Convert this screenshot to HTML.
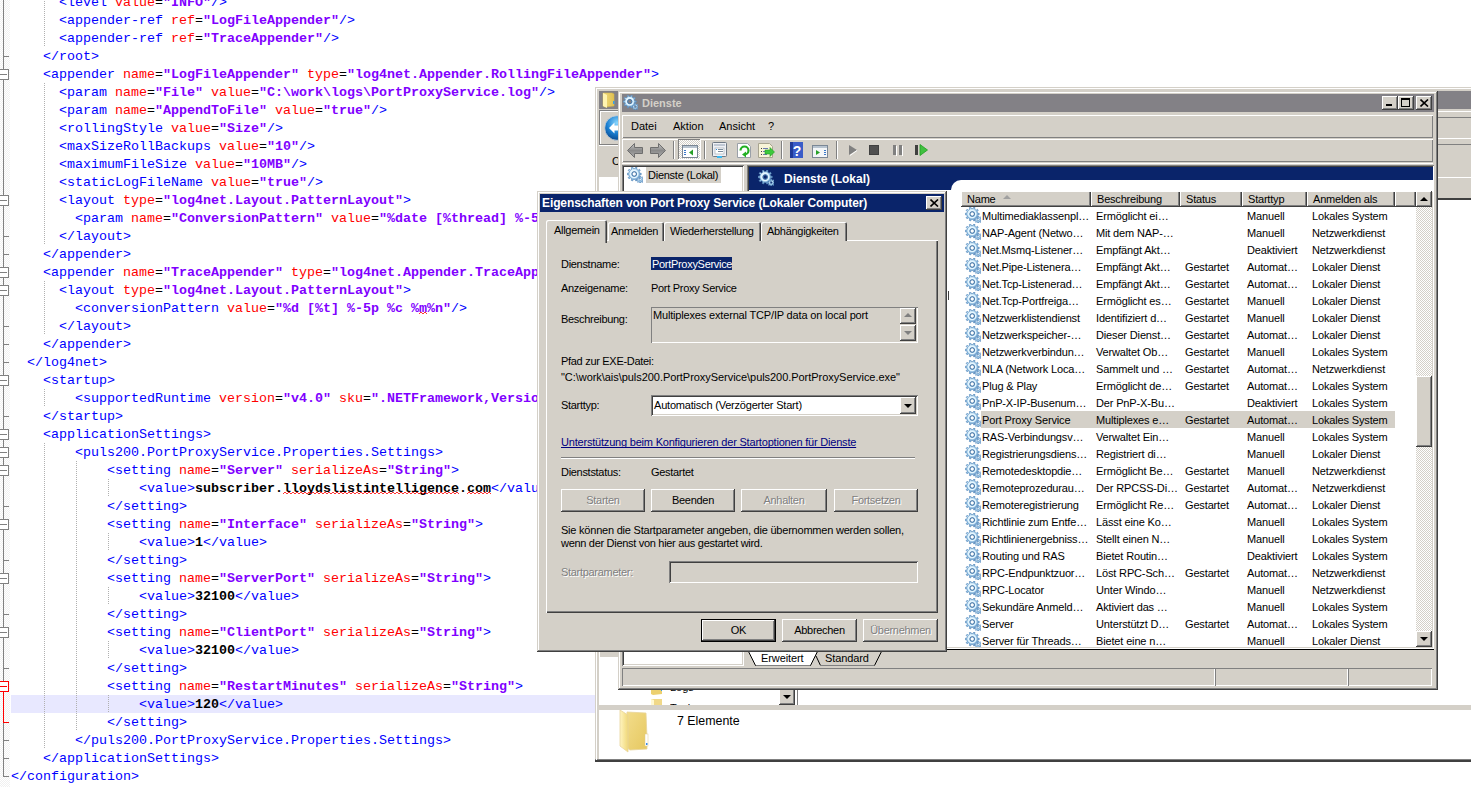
<!DOCTYPE html>
<html><head><meta charset="utf-8"><style>
*{margin:0;padding:0;box-sizing:border-box}
html,body{width:1471px;height:787px;overflow:hidden;background:#fff;position:relative}
div,span{position:absolute}
#ed .ln{white-space:pre;font-family:"Liberation Mono",monospace;font-size:13.333px;line-height:18px;height:18px}
#ed i{font-style:normal;position:static}
#ed .t{color:#0000ff}
#ed .a{color:#ff0000}
#ed .e{color:#000}
#ed .v{color:#8000ff;font-weight:bold}
#ed .x{color:#000;font-weight:bold}
.ui{font-family:"Liberation Sans",sans-serif;font-size:11px;color:#000;white-space:nowrap}
</style></head><body>
<div id="ed">
<div style="position:absolute;left:11px;top:695px;width:590px;height:18px;background:#e8e8ff"></div>
<div class="ln" style="left:59px;top:-6px"><i class="t">&lt;level </i><i class="a">value</i><i class="e">=</i><i class="v">&quot;INFO&quot;</i><i class="t">/&gt;</i></div>
<div class="ln" style="left:59px;top:12px"><i class="t">&lt;appender-ref </i><i class="a">ref</i><i class="e">=</i><i class="v">&quot;LogFileAppender&quot;</i><i class="t">/&gt;</i></div>
<div class="ln" style="left:59px;top:30px"><i class="t">&lt;appender-ref </i><i class="a">ref</i><i class="e">=</i><i class="v">&quot;TraceAppender&quot;</i><i class="t">/&gt;</i></div>
<div class="ln" style="left:43px;top:48px"><i class="t">&lt;/root&gt;</i></div>
<div class="ln" style="left:43px;top:66px"><i class="t">&lt;appender </i><i class="a">name</i><i class="e">=</i><i class="v">&quot;LogFileAppender&quot;</i><i class="t"> </i><i class="a">type</i><i class="e">=</i><i class="v">&quot;log4net.Appender.RollingFileAppender&quot;</i><i class="t">&gt;</i></div>
<div class="ln" style="left:59px;top:84px"><i class="t">&lt;param </i><i class="a">name</i><i class="e">=</i><i class="v">&quot;File&quot;</i><i class="t"> </i><i class="a">value</i><i class="e">=</i><i class="v">&quot;C:\work\logs\PortProxyService.log&quot;</i><i class="t">/&gt;</i></div>
<div class="ln" style="left:59px;top:102px"><i class="t">&lt;param </i><i class="a">name</i><i class="e">=</i><i class="v">&quot;AppendToFile&quot;</i><i class="t"> </i><i class="a">value</i><i class="e">=</i><i class="v">&quot;true&quot;</i><i class="t">/&gt;</i></div>
<div class="ln" style="left:59px;top:120px"><i class="t">&lt;rollingStyle </i><i class="a">value</i><i class="e">=</i><i class="v">&quot;Size&quot;</i><i class="t">/&gt;</i></div>
<div class="ln" style="left:59px;top:138px"><i class="t">&lt;maxSizeRollBackups </i><i class="a">value</i><i class="e">=</i><i class="v">&quot;10&quot;</i><i class="t">/&gt;</i></div>
<div class="ln" style="left:59px;top:156px"><i class="t">&lt;maximumFileSize </i><i class="a">value</i><i class="e">=</i><i class="v">&quot;10MB&quot;</i><i class="t">/&gt;</i></div>
<div class="ln" style="left:59px;top:174px"><i class="t">&lt;staticLogFileName </i><i class="a">value</i><i class="e">=</i><i class="v">&quot;true&quot;</i><i class="t">/&gt;</i></div>
<div class="ln" style="left:59px;top:192px"><i class="t">&lt;layout </i><i class="a">type</i><i class="e">=</i><i class="v">&quot;log4net.Layout.PatternLayout&quot;</i><i class="t">&gt;</i></div>
<div class="ln" style="left:75px;top:210px"><i class="t">&lt;param </i><i class="a">name</i><i class="e">=</i><i class="v">&quot;ConversionPattern&quot;</i><i class="t"> </i><i class="a">value</i><i class="e">=</i><i class="v">&quot;%date [%thread] %-5level %logger - %message%newline&quot;</i><i class="t">/&gt;</i></div>
<div class="ln" style="left:59px;top:228px"><i class="t">&lt;/layout&gt;</i></div>
<div class="ln" style="left:43px;top:246px"><i class="t">&lt;/appender&gt;</i></div>
<div class="ln" style="left:43px;top:264px"><i class="t">&lt;appender </i><i class="a">name</i><i class="e">=</i><i class="v">&quot;TraceAppender&quot;</i><i class="t"> </i><i class="a">type</i><i class="e">=</i><i class="v">&quot;log4net.Appender.TraceAppender&quot;</i><i class="t">&gt;</i></div>
<div class="ln" style="left:59px;top:282px"><i class="t">&lt;layout </i><i class="a">type</i><i class="e">=</i><i class="v">&quot;log4net.Layout.PatternLayout&quot;</i><i class="t">&gt;</i></div>
<div class="ln" style="left:75px;top:300px"><i class="t">&lt;conversionPattern </i><i class="a">value</i><i class="e">=</i><i class="v">&quot;%d [%t] %-5p %c %m%n&quot;</i><i class="t">/&gt;</i></div>
<div class="ln" style="left:59px;top:318px"><i class="t">&lt;/layout&gt;</i></div>
<div class="ln" style="left:43px;top:336px"><i class="t">&lt;/appender&gt;</i></div>
<div class="ln" style="left:27px;top:354px"><i class="t">&lt;/log4net&gt;</i></div>
<div class="ln" style="left:43px;top:372px"><i class="t">&lt;startup&gt;</i></div>
<div class="ln" style="left:75px;top:390px"><i class="t">&lt;supportedRuntime </i><i class="a">version</i><i class="e">=</i><i class="v">&quot;v4.0&quot;</i><i class="t"> </i><i class="a">sku</i><i class="e">=</i><i class="v">&quot;.NETFramework,Version=v4.5&quot;</i><i class="t">/&gt;</i></div>
<div class="ln" style="left:43px;top:408px"><i class="t">&lt;/startup&gt;</i></div>
<div class="ln" style="left:43px;top:426px"><i class="t">&lt;applicationSettings&gt;</i></div>
<div class="ln" style="left:75px;top:444px"><i class="t">&lt;puls200.PortProxyService.Properties.Settings&gt;</i></div>
<div class="ln" style="left:107px;top:462px"><i class="t">&lt;setting </i><i class="a">name</i><i class="e">=</i><i class="v">&quot;Server&quot;</i><i class="t"> </i><i class="a">serializeAs</i><i class="e">=</i><i class="v">&quot;String&quot;</i><i class="t">&gt;</i></div>
<div class="ln" style="left:139px;top:480px"><i class="t">&lt;value&gt;</i><i class="x">subscriber.lloydslistintelligence.com</i><i class="t">&lt;/value&gt;</i></div>
<div class="ln" style="left:107px;top:498px"><i class="t">&lt;/setting&gt;</i></div>
<div class="ln" style="left:107px;top:516px"><i class="t">&lt;setting </i><i class="a">name</i><i class="e">=</i><i class="v">&quot;Interface&quot;</i><i class="t"> </i><i class="a">serializeAs</i><i class="e">=</i><i class="v">&quot;String&quot;</i><i class="t">&gt;</i></div>
<div class="ln" style="left:139px;top:534px"><i class="t">&lt;value&gt;</i><i class="x">1</i><i class="t">&lt;/value&gt;</i></div>
<div class="ln" style="left:107px;top:552px"><i class="t">&lt;/setting&gt;</i></div>
<div class="ln" style="left:107px;top:570px"><i class="t">&lt;setting </i><i class="a">name</i><i class="e">=</i><i class="v">&quot;ServerPort&quot;</i><i class="t"> </i><i class="a">serializeAs</i><i class="e">=</i><i class="v">&quot;String&quot;</i><i class="t">&gt;</i></div>
<div class="ln" style="left:139px;top:588px"><i class="t">&lt;value&gt;</i><i class="x">32100</i><i class="t">&lt;/value&gt;</i></div>
<div class="ln" style="left:107px;top:606px"><i class="t">&lt;/setting&gt;</i></div>
<div class="ln" style="left:107px;top:624px"><i class="t">&lt;setting </i><i class="a">name</i><i class="e">=</i><i class="v">&quot;ClientPort&quot;</i><i class="t"> </i><i class="a">serializeAs</i><i class="e">=</i><i class="v">&quot;String&quot;</i><i class="t">&gt;</i></div>
<div class="ln" style="left:139px;top:642px"><i class="t">&lt;value&gt;</i><i class="x">32100</i><i class="t">&lt;/value&gt;</i></div>
<div class="ln" style="left:107px;top:660px"><i class="t">&lt;/setting&gt;</i></div>
<div class="ln" style="left:107px;top:678px"><i class="t">&lt;setting </i><i class="a">name</i><i class="e">=</i><i class="v">&quot;RestartMinutes&quot;</i><i class="t"> </i><i class="a">serializeAs</i><i class="e">=</i><i class="v">&quot;String&quot;</i><i class="t">&gt;</i></div>
<div class="ln" style="left:139px;top:696px"><i class="t">&lt;value&gt;</i><i class="x">120</i><i class="t">&lt;/value&gt;</i></div>
<div class="ln" style="left:107px;top:714px"><i class="t">&lt;/setting&gt;</i></div>
<div class="ln" style="left:75px;top:732px"><i class="t">&lt;/puls200.PortProxyService.Properties.Settings&gt;</i></div>
<div class="ln" style="left:43px;top:750px"><i class="t">&lt;/applicationSettings&gt;</i></div>
<div class="ln" style="left:11px;top:768px"><i class="t">&lt;/configuration&gt;</i></div>
<div style="left:0;top:0;width:10px;height:787px;background:repeating-conic-gradient(#f0f0f0 0 25%,#fff 0 50%) 0 0/2px 2px"></div>
<div style="left:3px;top:0;width:1px;height:776px;background:#808080"></div>
<div style="left:3px;top:686px;width:1px;height:36px;background:#ff0000"></div>
<div style="left:3px;top:56px;width:6px;height:1px;background:#808080"></div>
<div style="left:3px;top:236px;width:6px;height:1px;background:#808080"></div>
<div style="left:3px;top:254px;width:6px;height:1px;background:#808080"></div>
<div style="left:3px;top:326px;width:6px;height:1px;background:#808080"></div>
<div style="left:3px;top:344px;width:6px;height:1px;background:#808080"></div>
<div style="left:3px;top:362px;width:6px;height:1px;background:#808080"></div>
<div style="left:3px;top:416px;width:6px;height:1px;background:#808080"></div>
<div style="left:3px;top:506px;width:6px;height:1px;background:#808080"></div>
<div style="left:3px;top:560px;width:6px;height:1px;background:#808080"></div>
<div style="left:3px;top:614px;width:6px;height:1px;background:#808080"></div>
<div style="left:3px;top:668px;width:6px;height:1px;background:#808080"></div>
<div style="left:3px;top:722px;width:6px;height:1px;background:#ff0000"></div>
<div style="left:3px;top:740px;width:6px;height:1px;background:#808080"></div>
<div style="left:3px;top:758px;width:6px;height:1px;background:#808080"></div>
<div style="left:3px;top:776px;width:6px;height:1px;background:#808080"></div>
<div style="left:-2px;top:69px;width:11px;height:11px;border:1px solid #808080;background:#fff"></div>
<div style="left:0;top:74px;width:7px;height:1px;background:#808080"></div>
<div style="left:-2px;top:195px;width:11px;height:11px;border:1px solid #808080;background:#fff"></div>
<div style="left:0;top:200px;width:7px;height:1px;background:#808080"></div>
<div style="left:-2px;top:267px;width:11px;height:11px;border:1px solid #808080;background:#fff"></div>
<div style="left:0;top:272px;width:7px;height:1px;background:#808080"></div>
<div style="left:-2px;top:285px;width:11px;height:11px;border:1px solid #808080;background:#fff"></div>
<div style="left:0;top:290px;width:7px;height:1px;background:#808080"></div>
<div style="left:-2px;top:375px;width:11px;height:11px;border:1px solid #808080;background:#fff"></div>
<div style="left:0;top:380px;width:7px;height:1px;background:#808080"></div>
<div style="left:-2px;top:429px;width:11px;height:11px;border:1px solid #808080;background:#fff"></div>
<div style="left:0;top:434px;width:7px;height:1px;background:#808080"></div>
<div style="left:-2px;top:447px;width:11px;height:11px;border:1px solid #808080;background:#fff"></div>
<div style="left:0;top:452px;width:7px;height:1px;background:#808080"></div>
<div style="left:-2px;top:465px;width:11px;height:11px;border:1px solid #808080;background:#fff"></div>
<div style="left:0;top:470px;width:7px;height:1px;background:#808080"></div>
<div style="left:-2px;top:519px;width:11px;height:11px;border:1px solid #808080;background:#fff"></div>
<div style="left:0;top:524px;width:7px;height:1px;background:#808080"></div>
<div style="left:-2px;top:573px;width:11px;height:11px;border:1px solid #808080;background:#fff"></div>
<div style="left:0;top:578px;width:7px;height:1px;background:#808080"></div>
<div style="left:-2px;top:627px;width:11px;height:11px;border:1px solid #808080;background:#fff"></div>
<div style="left:0;top:632px;width:7px;height:1px;background:#808080"></div>
<div style="left:-2px;top:681px;width:11px;height:11px;border:1px solid #ff0000;background:#fff"></div>
<div style="left:0;top:686px;width:7px;height:1px;background:#ff0000"></div>
<div style="left:44px;top:-7px;width:1px;height:54px;background:repeating-linear-gradient(#b0b0b0 0 1px,transparent 1px 2px)"></div>
<div style="left:44px;top:83px;width:1px;height:162px;background:repeating-linear-gradient(#b0b0b0 0 1px,transparent 1px 2px)"></div>
<div style="left:44px;top:281px;width:1px;height:54px;background:repeating-linear-gradient(#b0b0b0 0 1px,transparent 1px 2px)"></div>
<div style="left:44px;top:389px;width:1px;height:18px;background:repeating-linear-gradient(#b0b0b0 0 1px,transparent 1px 2px)"></div>
<div style="left:44px;top:443px;width:1px;height:306px;background:repeating-linear-gradient(#b0b0b0 0 1px,transparent 1px 2px)"></div>
<div style="left:76px;top:461px;width:1px;height:270px;background:repeating-linear-gradient(#b0b0b0 0 1px,transparent 1px 2px)"></div>
<div style="left:108px;top:479px;width:1px;height:18px;background:repeating-linear-gradient(#b0b0b0 0 1px,transparent 1px 2px)"></div>
<div style="left:108px;top:533px;width:1px;height:18px;background:repeating-linear-gradient(#b0b0b0 0 1px,transparent 1px 2px)"></div>
<div style="left:108px;top:587px;width:1px;height:18px;background:repeating-linear-gradient(#b0b0b0 0 1px,transparent 1px 2px)"></div>
<div style="left:108px;top:641px;width:1px;height:18px;background:repeating-linear-gradient(#b0b0b0 0 1px,transparent 1px 2px)"></div>
<div style="left:108px;top:695px;width:1px;height:18px;background:repeating-linear-gradient(#b0b0b0 0 1px,transparent 1px 2px)"></div>
<svg style="position:absolute;left:283px;top:492px" width="177" height="3"><polyline points="0,2 2,0 4,2 6,0 8,2 10,0 12,2 14,0 16,2 18,0 20,2 22,0 24,2 26,0 28,2 30,0 32,2 34,0 36,2 38,0 40,2 42,0 44,2 46,0 48,2 50,0 52,2 54,0 56,2 58,0 60,2 62,0 64,2 66,0 68,2 70,0 72,2 74,0 76,2 78,0 80,2 82,0 84,2 86,0 88,2 90,0 92,2 94,0 96,2 98,0 100,2 102,0 104,2 106,0 108,2 110,0 112,2 114,0 116,2 118,0 120,2 122,0 124,2 126,0 128,2 130,0 132,2 134,0 136,2 138,0 140,2 142,0 144,2 146,0 148,2 150,0 152,2 154,0 156,2 158,0 160,2 162,0 164,2 166,0 168,2 170,0 172,2 174,0 176,2" fill="none" stroke="#ff0000" stroke-width="0.8"/></svg>
<svg style="position:absolute;left:467px;top:492px" width="25" height="3"><polyline points="0,2 2,0 4,2 6,0 8,2 10,0 12,2 14,0 16,2 18,0 20,2 22,0 24,2" fill="none" stroke="#ff0000" stroke-width="0.8"/></svg>
<svg style="position:absolute;left:419px;top:312px" width="9" height="3"><polyline points="0,2 2,0 4,2 6,0 8,2" fill="none" stroke="#ff0000" stroke-width="0.8"/></svg>
</div>
<svg width="0" height="0" style="position:absolute"><defs><radialGradient id="gg" cx="40%" cy="35%" r="70%"><stop offset="0" stop-color="#f0faff"/><stop offset="0.5" stop-color="#b4dcf4"/><stop offset="1" stop-color="#6a9ccc"/></radialGradient><g id="gear"><path d="M15.77,12.19 L16.77,12.16 L16.77,13.04 L15.77,13.01 L15.60,13.59 L15.31,14.12 L16.04,14.81 L15.41,15.44 L14.72,14.71 L14.19,15.00 L13.61,15.17 L13.64,16.17 L12.76,16.17 L12.79,15.17 L12.21,15.00 L11.68,14.71 L10.99,15.44 L10.36,14.81 L11.09,14.12 L10.80,13.59 L10.63,13.01 L9.63,13.04 L9.63,12.16 L10.63,12.19 L10.80,11.61 L11.09,11.08 L10.36,10.39 L10.99,9.76 L11.68,10.49 L12.21,10.20 L12.79,10.03 L12.76,9.03 L13.64,9.03 L13.61,10.03 L14.19,10.20 L14.72,10.49 L15.41,9.76 L16.04,10.39 L15.31,11.08 L15.60,11.61ZM12.10,12.60 a1.10,1.10 0 1,0 2.20,0 a1.10,1.10 0 1,0 -2.20,0Z" fill="url(#gg)" fill-rule="evenodd" stroke="#5b8dbe" stroke-width="0.7"/><path d="M12.56,6.31 L14.17,6.31 L14.17,7.69 L12.56,7.69 L12.34,8.67 L11.94,9.59 L13.24,10.53 L12.43,11.65 L11.13,10.70 L10.37,11.37 L9.51,11.88 L10.01,13.41 L8.69,13.84 L8.20,12.31 L7.20,12.40 L6.20,12.31 L5.71,13.84 L4.39,13.41 L4.89,11.88 L4.03,11.37 L3.27,10.70 L1.97,11.65 L1.16,10.53 L2.46,9.59 L2.06,8.67 L1.84,7.69 L0.23,7.69 L0.23,6.31 L1.84,6.31 L2.06,5.33 L2.46,4.41 L1.16,3.47 L1.97,2.35 L3.27,3.30 L4.03,2.63 L4.89,2.12 L4.39,0.59 L5.71,0.16 L6.20,1.69 L7.20,1.60 L8.20,1.69 L8.69,0.16 L10.01,0.59 L9.51,2.12 L10.37,2.63 L11.13,3.30 L12.43,2.35 L13.24,3.47 L11.94,4.41 L12.34,5.33ZM4.90,7.00 a2.30,2.30 0 1,0 4.60,0 a2.30,2.30 0 1,0 -4.60,0Z" fill="url(#gg)" fill-rule="evenodd" stroke="#5b8dbe" stroke-width="0.8"/><circle cx="7.2" cy="7" r="3.6" fill="none" stroke="#e6f6ff" stroke-width="1.3"/><circle cx="7.2" cy="7" r="2.3" fill="none" stroke="#3f6f9f" stroke-width="0.8"/></g></defs></svg>
<div class="" style="left:595px;top:87px;width:900px;height:675px;background:#d4d0c8;box-shadow:inset -1px -1px #404040,inset 1px 1px #d4d0c8,inset -2px -2px #808080,inset 2px 2px #fff;"></div>
<div class="" style="left:599px;top:91px;width:900px;height:18px;background:#838186"></div>
<div class="" style="left:600px;top:110px;width:880px;height:30px;background:#d4d0c8"></div>
<div class="" style="left:599px;top:110px;width:22px;height:35px;box-shadow:inset 1px 1px #808080,inset -1px -1px #808080,inset 2px 2px #fff;background:#d4d0c8"></div>
<div class="" style="left:599px;top:145px;width:20px;height:1px;background:#fff"></div>
<div class="ui" style="left:612px;top:154px;line-height:14px;height:14px;font-size:11px;">C</div>
<svg style="position:absolute;left:601px;top:92px" width="16" height="17" viewBox="0 0 16 17">
<defs><linearGradient id="fg" x1="0" y1="0" x2="1" y2="0"><stop offset="0" stop-color="#f0dc80"/><stop offset="1" stop-color="#e0c050"/></linearGradient></defs>
<path d="M2,1 L11,1 L13,2 L13,14 L4,15 L2,14Z" fill="url(#fg)" stroke="#d8b848" stroke-width="0.5"/>
<path d="M2,1 L6,3 L6,16 L2,14Z" fill="#fff4b0"/>
<rect x="12" y="9" width="1.5" height="3" fill="#3aa0e8"/>
</svg>
<svg style="position:absolute;left:601px;top:114px" width="18" height="29" viewBox="0 0 18 29">
<defs><radialGradient id="bb" cx="50%" cy="30%" r="70%"><stop offset="0" stop-color="#8ad8ff"/><stop offset="0.6" stop-color="#1a7ed0"/><stop offset="1" stop-color="#0a4a90"/></radialGradient></defs>
<circle cx="16" cy="14" r="12.3" fill="url(#bb)" stroke="#c8d0d8" stroke-width="0.8"/>
<path d="M8,14 L13.5,8.5 L13.5,11.5 L18,11.5 L18,16.5 L13.5,16.5 L13.5,19.5Z" fill="#fff"/>
</svg>
<div class="" style="left:599px;top:177px;width:20px;height:528px;background:#fff"></div>
<div class="" style="left:1438px;top:110px;width:40px;height:90px;background:#d4d0c8"></div>
<div class="" style="left:1438px;top:111px;width:40px;height:1px;background:#fff"></div>
<div class="" style="left:1438px;top:117px;width:40px;height:1px;background:#808080"></div>
<div class="" style="left:1438px;top:138px;width:40px;height:1px;background:#fff"></div>
<div class="" style="left:1438px;top:144px;width:40px;height:1px;background:#808080"></div>
<div class="" style="left:1438px;top:177px;width:40px;height:1px;background:#fff"></div>
<div class="" style="left:1438px;top:198px;width:40px;height:2px;background:#404040"></div>
<div class="" style="left:599px;top:200px;width:880px;height:505px;background:#fff"></div>
<div class="" style="left:600px;top:651px;width:19px;height:6px;background:#d4d0c8"></div>
<div class="" style="left:599px;top:705px;width:880px;height:5px;background:#d4d0c8"></div>
<div class="" style="left:599px;top:710px;width:880px;height:49px;background:#fff"></div>
<div class="" style="left:595px;top:759px;width:900px;height:1px;background:#808080"></div>
<div class="" style="left:595px;top:760px;width:900px;height:2px;background:#404040"></div>
<div class="" style="left:596px;top:88px;width:1px;height:672px;background:#fff"></div>
<div class="" style="left:779px;top:689px;width:16px;height:16px;background:#d4d0c8;box-shadow:inset -1px -1px #404040,inset 1px 1px #fff,inset -2px -2px #808080;"></div>
<div style="left:783px;top:695px;width:0;height:0;border-left:4px solid transparent;border-right:4px solid transparent;border-top:4px solid #000"></div>
<div class="" style="left:797px;top:689px;width:1px;height:16px;background:#808080"></div>
<div class="ui" style="left:677px;top:714px;line-height:14px;height:14px;font-size:12.4px;">7 Elemente</div>
<svg style="position:absolute;left:618px;top:708px" width="32" height="46" viewBox="0 0 32 46">
<defs><linearGradient id="lf1" x1="0" y1="0" x2="1" y2="1"><stop offset="0" stop-color="#f2dc8a"/><stop offset="1" stop-color="#e6c860"/></linearGradient>
<linearGradient id="lf2" x1="0" y1="0" x2="1" y2="0"><stop offset="0" stop-color="#fff4c0"/><stop offset="1" stop-color="#f0d878"/></linearGradient></defs>
<path d="M9,4 L28,5 L29,30 L29,41 L12,42 L9,40Z" fill="url(#lf1)" stroke="#e8d49a" stroke-width="0.8"/>
<rect x="27" y="26" width="3" height="12" fill="#fff" stroke="#e0cc90" stroke-width="0.5"/>
<rect x="28" y="35" width="1.5" height="2" fill="#3a8ae8"/>
<path d="M2,2 L10,7 L10,44 L2,38Z" fill="url(#lf2)" stroke="#e8d49a" stroke-width="0.8"/>
</svg>
<svg style="position:absolute;left:650px;top:689px" width="14" height="17" viewBox="0 0 14 17">
<path d="M1,0 L12,0 L12,5 L3,6 L1,5Z" fill="#ecd070"/><rect x="11" y="0" width="1" height="2" fill="#3aa0e8"/>
<path d="M1,10 L12,10 L12,16 L1,16Z" fill="#f0d888"/><path d="M1,10 L4,11 L4,16 L1,16Z" fill="#fff8d0"/>
</svg>
<div style="left:670px;top:689px;width:40px;height:6px;overflow:hidden"><div class="ui" style="left:0;top:-9px;line-height:14px">Logs</div></div>
<div style="left:670px;top:699px;width:40px;height:6px;overflow:hidden"><div class="ui" style="left:0;top:2px;line-height:14px">Tools</div></div>
<div class="" style="left:618px;top:91px;width:820px;height:599px;background:#d4d0c8;box-shadow:inset -1px -1px #404040,inset 1px 1px #d4d0c8,inset -2px -2px #808080,inset 2px 2px #fff;"></div>
<div class="" style="left:622px;top:94px;width:812px;height:18px;background:#838186"></div>
<div class="ui" style="left:642px;top:96px;line-height:14px;height:14px;font-size:11px;color:#d4d0c8;font-weight:bold">Dienste</div>
<div class="" style="left:1382px;top:96px;width:16px;height:14px;background:#d4d0c8;box-shadow:inset -1px -1px #404040,inset 1px 1px #fff,inset -2px -2px #808080;"></div>
<div class="" style="left:1398px;top:96px;width:16px;height:14px;background:#d4d0c8;box-shadow:inset -1px -1px #404040,inset 1px 1px #fff,inset -2px -2px #808080;"></div>
<div class="" style="left:1416px;top:96px;width:16px;height:14px;background:#d4d0c8;box-shadow:inset -1px -1px #404040,inset 1px 1px #fff,inset -2px -2px #808080;"></div>
<div class="" style="left:1386px;top:104px;width:6px;height:2px;background:#000"></div>
<div class="" style="left:1401px;top:98px;width:9px;height:9px;border:1px solid #000;border-top-width:2px"></div>
<svg style="position:absolute;left:1420px;top:99px" width="9" height="8"><path d="M0.5,0.5 L8,7.5 M8,0.5 L0.5,7.5" stroke="#000" stroke-width="1.6"/></svg>
<div class="" style="left:622px;top:115px;width:811px;height:23px;box-shadow:inset 1px 1px #fff,inset -1px -1px #808080"></div>
<div class="ui" style="left:631px;top:119px;line-height:14px;height:14px;font-size:11px;">Datei</div>
<div class="ui" style="left:673px;top:119px;line-height:14px;height:14px;font-size:11px;">Aktion</div>
<div class="ui" style="left:719px;top:119px;line-height:14px;height:14px;font-size:11px;">Ansicht</div>
<div class="ui" style="left:768px;top:119px;line-height:14px;height:14px;font-size:11px;">?</div>
<div class="" style="left:622px;top:139px;width:811px;height:23px;box-shadow:inset 1px 1px #fff,inset -1px -1px #808080"></div>
<div class="" style="left:622px;top:163px;width:811px;height:1px;background:#fff"></div>
<svg style="position:absolute;left:622px;top:138px" width="320" height="26" viewBox="0 0 320 26">
<defs>
<linearGradient id="ag" x1="0" y1="0" x2="0" y2="1"><stop offset="0" stop-color="#c8c8c8"/><stop offset="0.5" stop-color="#8a8a8a"/><stop offset="1" stop-color="#b0b0b0"/></linearGradient>
<pattern id="dots" width="2" height="2" patternUnits="userSpaceOnUse"><rect width="2" height="2" fill="#fff"/><rect width="1" height="1" fill="#d4d0c8"/><rect x="1" y="1" width="1" height="1" fill="#d4d0c8"/></pattern>
</defs>
<path d="M5.5,12.5 L12.5,5.5 L12.5,9.5 L20.5,9.5 L20.5,15.5 L12.5,15.5 L12.5,19.5Z" fill="url(#ag)" stroke="#6e6e6e" stroke-width="1"/>
<path d="M43.5,12.5 L36.5,5.5 L36.5,9.5 L28.5,9.5 L28.5,15.5 L36.5,15.5 L36.5,19.5Z" fill="url(#ag)" stroke="#6e6e6e" stroke-width="1"/>
<rect x="51" y="3" width="1" height="18" fill="#808080"/><rect x="52" y="3" width="1" height="18" fill="#fff"/>
<rect x="56" y="1" width="23" height="21" fill="url(#dots)"/>
<rect x="56" y="1" width="22" height="1" fill="#808080"/><rect x="56" y="1" width="1" height="21" fill="#808080"/>
<rect x="56" y="21" width="23" height="1" fill="#fff"/><rect x="78" y="1" width="1" height="21" fill="#fff"/>
<rect x="60.5" y="7.5" width="15" height="12" fill="#fff" stroke="#7b8795"/>
<rect x="61" y="8" width="14" height="2" fill="#b8c4d0"/>
<rect x="65.5" y="10.5" width="0" height="9" stroke="#7b8795"/>
<rect x="62" y="12" width="2" height="1" fill="#3a78c8"/><rect x="62" y="14" width="2" height="1" fill="#3a78c8"/><rect x="62" y="16" width="2" height="1" fill="#3a78c8"/>
<path d="M67,14.5 L71,11.5 L71,17.5Z" fill="#28a028"/>
<rect x="82" y="3" width="1" height="18" fill="#808080"/><rect x="83" y="3" width="1" height="18" fill="#fff"/>
<rect x="90.5" y="4.5" width="14" height="14" rx="1" fill="#eef0f4" stroke="#6e7884"/>
<rect x="92" y="6" width="11" height="2" fill="#c0c8d4"/>
<rect x="93" y="10" width="9" height="6" fill="#fff" stroke="#98a4b0" stroke-width="0.6"/>
<rect x="94" y="11" width="1" height="1" fill="#2a8ae0"/><rect x="96" y="11" width="5" height="1" fill="#7a8a9a"/><rect x="96" y="13" width="5" height="1" fill="#7a8a9a"/>
<rect x="95" y="18" width="5" height="2" fill="#3ab8f0"/>
<path d="M115.5,5.5 L125.5,5.5 L128.5,8.5 L128.5,19.5 L115.5,19.5Z" fill="#fff" stroke="#9aa0a8"/>
<path d="M118.5,12.5 a4,4 0 1,1 4,4" fill="none" stroke="#22b022" stroke-width="2.2"/>
<path d="M120,16.5 L124,13.5 L124,19.5Z" fill="#22b022"/>
<path d="M136.5,5.5 L147.5,5.5 L150.5,8.5 L150.5,19.5 L136.5,19.5Z" fill="#f8f4d8" stroke="#a8a490"/>
<rect x="139" y="10" width="1" height="1" fill="#404040"/><rect x="141" y="10" width="5" height="1" fill="#6a7ab0"/>
<rect x="139" y="13" width="1" height="1" fill="#404040"/><rect x="141" y="13" width="4" height="1" fill="#6a7ab0"/>
<rect x="139" y="16" width="1" height="1" fill="#404040"/><rect x="141" y="16" width="4" height="1" fill="#6a7ab0"/>
<path d="M143,12 L148,12 L148,9.5 L152.5,14 L148,18.5 L148,16 L143,16Z" fill="#3cc83c" stroke="#20a020" stroke-width="0.6"/>
<rect x="159" y="3" width="1" height="18" fill="#808080"/><rect x="160" y="3" width="1" height="18" fill="#fff"/>
<rect x="168" y="4" width="13" height="16" fill="#3a5cc8"/><rect x="168" y="4" width="3" height="16" fill="#203a98"/>
<text x="175" y="17.5" font-family="Liberation Sans" font-weight="bold" font-size="14" fill="#fff" text-anchor="middle">?</text>
<rect x="190.5" y="7.5" width="15" height="12" fill="#f4f6f8" stroke="#7b8795"/>
<rect x="191" y="8" width="14" height="2" fill="#b8c4d0"/>
<rect x="200.5" y="10.5" width="0" height="9" stroke="#7b8795"/>
<path d="M194,12 L198,14.5 L194,17Z" fill="#28a028"/>
<rect x="202" y="12" width="2" height="1" fill="#3a78c8"/><rect x="202" y="14" width="2" height="1" fill="#3a78c8"/><rect x="202" y="16" width="2" height="1" fill="#3a78c8"/>
<rect x="214" y="3" width="1" height="18" fill="#808080"/><rect x="215" y="3" width="1" height="18" fill="#fff"/>
<path d="M227,7 L235,12 L227,17Z" fill="#808080"/><path d="M235,12.5 L228,17.5" stroke="#fff" stroke-width="1"/>
<rect x="247" y="7" width="10" height="10" fill="#404040"/><rect x="248" y="8" width="8" height="8" fill="#505050"/>
<rect x="271" y="7" width="3" height="10" fill="#808080"/><rect x="277" y="7" width="3" height="10" fill="#808080"/>
<rect x="274" y="8" width="1" height="10" fill="#fff"/><rect x="280" y="8" width="1" height="10" fill="#fff"/>
<rect x="293" y="7" width="3" height="10" fill="#404040"/>
<path d="M298,6.5 L305.5,12 L298,17.5Z" fill="#40c040" stroke="#20a020" stroke-width="0.8"/>
</svg>
<svg style="position:absolute;left:623px;top:95px" width="15" height="15" viewBox="0 0 16 16"><use href="#gear"/></svg>
<div class="" style="left:622px;top:165px;width:122px;height:501px;box-shadow:inset 1px 1px #808080,inset -1px -1px #fff,inset 2px 2px #404040,inset -2px -2px #d4d0c8;background:#fff"></div>
<div class="" style="left:646px;top:167px;width:75px;height:16px;background:#d4d0c8"></div>
<div class="ui" style="left:648px;top:168px;line-height:14px;height:14px;font-size:11px;letter-spacing:-0.25px">Dienste (Lokal)</div>
<div class="" style="left:747px;top:165px;width:687px;height:484px;box-shadow:inset 1px 1px #808080,inset -1px -1px #fff,inset 2px 2px #404040,inset -2px -2px #d4d0c8;background:#fff"></div>
<div class="" style="left:749px;top:167px;width:684px;height:23px;background:#0a246a"></div>
<div class="" style="left:951px;top:180px;width:482px;height:12px;background:#fff;border-top-left-radius:10px"></div>
<div class="ui" style="left:784px;top:172px;line-height:14px;height:14px;font-size:12px;color:#fff;font-weight:bold">Dienste (Lokal)</div>
<div class="" style="left:948px;top:291px;width:1px;height:9px;background:#404040"></div>
<svg style="position:absolute;left:627px;top:167px" width="16" height="16" viewBox="0 0 16 16"><use href="#gear"/></svg>
<svg style="position:absolute;left:758px;top:170px" width="16" height="16" viewBox="0 0 16 16"><use href="#gear"/></svg>
<svg style="position:absolute;left:744px;top:650px" width="150" height="18" viewBox="0 0 150 18">
<path d="M75.5,15.5 L131,15.5 L137.5,2 L71,2 Z" fill="#d4d0c8"/>
<path d="M72,6 L76.5,15.5 L130.5,15.5 L137.5,1.5" fill="none" stroke="#000" stroke-width="1"/>
<path d="M76,15.5 L130.5,15.5" stroke="#808080" stroke-width="1"/>
<path d="M4.5,1.5 L11.5,15.5 L66.5,15.5 L73,1.5 Z" fill="#fff"/>
<path d="M4.5,1.5 L11.5,15.5 L66.5,15.5 L73.5,1.5" fill="none" stroke="#000" stroke-width="1"/>
<path d="M12,15.5 L66,15.5" stroke="#808080" stroke-width="1"/>
</svg>
<div class="ui" style="left:761px;top:651px;line-height:14px;height:14px;font-size:11px;letter-spacing:-0.1px">Erweitert</div>
<div class="ui" style="left:825px;top:651px;line-height:14px;height:14px;font-size:11px;letter-spacing:-0.1px">Standard</div>
<div class="" style="left:622px;top:668px;width:593px;height:18px;box-shadow:inset 1px 1px #808080,inset -1px -1px #fff;"></div>
<div class="" style="left:1215px;top:668px;width:133px;height:18px;box-shadow:inset 1px 1px #808080,inset -1px -1px #fff;"></div>
<div class="" style="left:1348px;top:668px;width:84px;height:18px;box-shadow:inset 1px 1px #808080,inset -1px -1px #fff;"></div>
<div class="" style="left:961px;top:191px;width:455px;height:16px;background:#d4d0c8"></div>
<div class="" style="left:961px;top:191px;width:130px;height:16px;box-shadow:inset 1px 1px #fff,inset -1px -1px #404040,inset -2px -2px #808080;background:#d4d0c8"></div>
<div class="ui" style="left:967px;top:192px;line-height:14px;height:14px;font-size:11px;letter-spacing:-0.2px">Name</div>
<div class="" style="left:1091px;top:191px;width:89px;height:16px;box-shadow:inset 1px 1px #fff,inset -1px -1px #404040,inset -2px -2px #808080;background:#d4d0c8"></div>
<div class="ui" style="left:1097px;top:192px;line-height:14px;height:14px;font-size:11px;letter-spacing:-0.2px">Beschreibung</div>
<div class="" style="left:1180px;top:191px;width:62px;height:16px;box-shadow:inset 1px 1px #fff,inset -1px -1px #404040,inset -2px -2px #808080;background:#d4d0c8"></div>
<div class="ui" style="left:1186px;top:192px;line-height:14px;height:14px;font-size:11px;letter-spacing:-0.2px">Status</div>
<div class="" style="left:1242px;top:191px;width:65px;height:16px;box-shadow:inset 1px 1px #fff,inset -1px -1px #404040,inset -2px -2px #808080;background:#d4d0c8"></div>
<div class="ui" style="left:1248px;top:192px;line-height:14px;height:14px;font-size:11px;letter-spacing:-0.2px">Starttyp</div>
<div class="" style="left:1307px;top:191px;width:88px;height:16px;box-shadow:inset 1px 1px #fff,inset -1px -1px #404040,inset -2px -2px #808080;background:#d4d0c8"></div>
<div class="ui" style="left:1313px;top:192px;line-height:14px;height:14px;font-size:11px;letter-spacing:-0.2px">Anmelden als</div>
<div class="" style="left:1395px;top:191px;width:21px;height:16px;box-shadow:inset 1px 1px #fff,inset -1px -1px #404040,inset -2px -2px #808080;background:#d4d0c8"></div>
<div style="left:1003px;top:195px;width:0;height:0;border-left:4px solid transparent;border-right:4px solid transparent;border-bottom:4px solid #a0a0a0"></div>
<div class="" style="left:961px;top:206px;width:455px;height:1px;background:#404040"></div>
<svg style="position:absolute;left:965px;top:207px" width="16" height="16" viewBox="0 0 16 16"><use href="#gear"/></svg>
<div class="ui" style="left:982px;top:209px;line-height:14px;height:14px;font-size:11px;letter-spacing:-0.15px">Multimediaklassenpl…</div>
<div class="ui" style="left:1096px;top:209px;line-height:14px;height:14px;font-size:11px;letter-spacing:-0.15px">Ermöglicht ei…</div>
<div class="ui" style="left:1247px;top:209px;line-height:14px;height:14px;font-size:11px;letter-spacing:-0.15px">Manuell</div>
<div class="ui" style="left:1312px;top:209px;line-height:14px;height:14px;font-size:11px;letter-spacing:-0.15px">Lokales System</div>
<svg style="position:absolute;left:965px;top:224px" width="16" height="16" viewBox="0 0 16 16"><use href="#gear"/></svg>
<div class="ui" style="left:982px;top:226px;line-height:14px;height:14px;font-size:11px;letter-spacing:-0.15px">NAP-Agent (Netwo…</div>
<div class="ui" style="left:1096px;top:226px;line-height:14px;height:14px;font-size:11px;letter-spacing:-0.15px">Mit dem NAP-…</div>
<div class="ui" style="left:1247px;top:226px;line-height:14px;height:14px;font-size:11px;letter-spacing:-0.15px">Manuell</div>
<div class="ui" style="left:1312px;top:226px;line-height:14px;height:14px;font-size:11px;letter-spacing:-0.15px">Netzwerkdienst</div>
<svg style="position:absolute;left:965px;top:241px" width="16" height="16" viewBox="0 0 16 16"><use href="#gear"/></svg>
<div class="ui" style="left:982px;top:243px;line-height:14px;height:14px;font-size:11px;letter-spacing:-0.15px">Net.Msmq-Listener…</div>
<div class="ui" style="left:1096px;top:243px;line-height:14px;height:14px;font-size:11px;letter-spacing:-0.15px">Empfängt Akt…</div>
<div class="ui" style="left:1247px;top:243px;line-height:14px;height:14px;font-size:11px;letter-spacing:-0.15px">Deaktiviert</div>
<div class="ui" style="left:1312px;top:243px;line-height:14px;height:14px;font-size:11px;letter-spacing:-0.15px">Netzwerkdienst</div>
<svg style="position:absolute;left:965px;top:258px" width="16" height="16" viewBox="0 0 16 16"><use href="#gear"/></svg>
<div class="ui" style="left:982px;top:260px;line-height:14px;height:14px;font-size:11px;letter-spacing:-0.15px">Net.Pipe-Listenera…</div>
<div class="ui" style="left:1096px;top:260px;line-height:14px;height:14px;font-size:11px;letter-spacing:-0.15px">Empfängt Akt…</div>
<div class="ui" style="left:1185px;top:260px;line-height:14px;height:14px;font-size:11px;letter-spacing:-0.15px">Gestartet</div>
<div class="ui" style="left:1247px;top:260px;line-height:14px;height:14px;font-size:11px;letter-spacing:-0.15px">Automat…</div>
<div class="ui" style="left:1312px;top:260px;line-height:14px;height:14px;font-size:11px;letter-spacing:-0.15px">Lokaler Dienst</div>
<svg style="position:absolute;left:965px;top:275px" width="16" height="16" viewBox="0 0 16 16"><use href="#gear"/></svg>
<div class="ui" style="left:982px;top:277px;line-height:14px;height:14px;font-size:11px;letter-spacing:-0.15px">Net.Tcp-Listenerad…</div>
<div class="ui" style="left:1096px;top:277px;line-height:14px;height:14px;font-size:11px;letter-spacing:-0.15px">Empfängt Akt…</div>
<div class="ui" style="left:1185px;top:277px;line-height:14px;height:14px;font-size:11px;letter-spacing:-0.15px">Gestartet</div>
<div class="ui" style="left:1247px;top:277px;line-height:14px;height:14px;font-size:11px;letter-spacing:-0.15px">Automat…</div>
<div class="ui" style="left:1312px;top:277px;line-height:14px;height:14px;font-size:11px;letter-spacing:-0.15px">Lokaler Dienst</div>
<svg style="position:absolute;left:965px;top:292px" width="16" height="16" viewBox="0 0 16 16"><use href="#gear"/></svg>
<div class="ui" style="left:982px;top:294px;line-height:14px;height:14px;font-size:11px;letter-spacing:-0.15px">Net.Tcp-Portfreiga…</div>
<div class="ui" style="left:1096px;top:294px;line-height:14px;height:14px;font-size:11px;letter-spacing:-0.15px">Ermöglicht es…</div>
<div class="ui" style="left:1185px;top:294px;line-height:14px;height:14px;font-size:11px;letter-spacing:-0.15px">Gestartet</div>
<div class="ui" style="left:1247px;top:294px;line-height:14px;height:14px;font-size:11px;letter-spacing:-0.15px">Manuell</div>
<div class="ui" style="left:1312px;top:294px;line-height:14px;height:14px;font-size:11px;letter-spacing:-0.15px">Lokaler Dienst</div>
<svg style="position:absolute;left:965px;top:309px" width="16" height="16" viewBox="0 0 16 16"><use href="#gear"/></svg>
<div class="ui" style="left:982px;top:311px;line-height:14px;height:14px;font-size:11px;letter-spacing:-0.15px">Netzwerklistendienst</div>
<div class="ui" style="left:1096px;top:311px;line-height:14px;height:14px;font-size:11px;letter-spacing:-0.15px">Identifiziert d…</div>
<div class="ui" style="left:1185px;top:311px;line-height:14px;height:14px;font-size:11px;letter-spacing:-0.15px">Gestartet</div>
<div class="ui" style="left:1247px;top:311px;line-height:14px;height:14px;font-size:11px;letter-spacing:-0.15px">Manuell</div>
<div class="ui" style="left:1312px;top:311px;line-height:14px;height:14px;font-size:11px;letter-spacing:-0.15px">Lokaler Dienst</div>
<svg style="position:absolute;left:965px;top:326px" width="16" height="16" viewBox="0 0 16 16"><use href="#gear"/></svg>
<div class="ui" style="left:982px;top:328px;line-height:14px;height:14px;font-size:11px;letter-spacing:-0.15px">Netzwerkspeicher-…</div>
<div class="ui" style="left:1096px;top:328px;line-height:14px;height:14px;font-size:11px;letter-spacing:-0.15px">Dieser Dienst…</div>
<div class="ui" style="left:1185px;top:328px;line-height:14px;height:14px;font-size:11px;letter-spacing:-0.15px">Gestartet</div>
<div class="ui" style="left:1247px;top:328px;line-height:14px;height:14px;font-size:11px;letter-spacing:-0.15px">Automat…</div>
<div class="ui" style="left:1312px;top:328px;line-height:14px;height:14px;font-size:11px;letter-spacing:-0.15px">Lokaler Dienst</div>
<svg style="position:absolute;left:965px;top:343px" width="16" height="16" viewBox="0 0 16 16"><use href="#gear"/></svg>
<div class="ui" style="left:982px;top:345px;line-height:14px;height:14px;font-size:11px;letter-spacing:-0.15px">Netzwerkverbindun…</div>
<div class="ui" style="left:1096px;top:345px;line-height:14px;height:14px;font-size:11px;letter-spacing:-0.15px">Verwaltet Ob…</div>
<div class="ui" style="left:1185px;top:345px;line-height:14px;height:14px;font-size:11px;letter-spacing:-0.15px">Gestartet</div>
<div class="ui" style="left:1247px;top:345px;line-height:14px;height:14px;font-size:11px;letter-spacing:-0.15px">Manuell</div>
<div class="ui" style="left:1312px;top:345px;line-height:14px;height:14px;font-size:11px;letter-spacing:-0.15px">Lokales System</div>
<svg style="position:absolute;left:965px;top:360px" width="16" height="16" viewBox="0 0 16 16"><use href="#gear"/></svg>
<div class="ui" style="left:982px;top:362px;line-height:14px;height:14px;font-size:11px;letter-spacing:-0.15px">NLA (Network Loca…</div>
<div class="ui" style="left:1096px;top:362px;line-height:14px;height:14px;font-size:11px;letter-spacing:-0.15px">Sammelt und …</div>
<div class="ui" style="left:1185px;top:362px;line-height:14px;height:14px;font-size:11px;letter-spacing:-0.15px">Gestartet</div>
<div class="ui" style="left:1247px;top:362px;line-height:14px;height:14px;font-size:11px;letter-spacing:-0.15px">Automat…</div>
<div class="ui" style="left:1312px;top:362px;line-height:14px;height:14px;font-size:11px;letter-spacing:-0.15px">Netzwerkdienst</div>
<svg style="position:absolute;left:965px;top:377px" width="16" height="16" viewBox="0 0 16 16"><use href="#gear"/></svg>
<div class="ui" style="left:982px;top:379px;line-height:14px;height:14px;font-size:11px;letter-spacing:-0.15px">Plug &amp; Play</div>
<div class="ui" style="left:1096px;top:379px;line-height:14px;height:14px;font-size:11px;letter-spacing:-0.15px">Ermöglicht de…</div>
<div class="ui" style="left:1185px;top:379px;line-height:14px;height:14px;font-size:11px;letter-spacing:-0.15px">Gestartet</div>
<div class="ui" style="left:1247px;top:379px;line-height:14px;height:14px;font-size:11px;letter-spacing:-0.15px">Automat…</div>
<div class="ui" style="left:1312px;top:379px;line-height:14px;height:14px;font-size:11px;letter-spacing:-0.15px">Lokales System</div>
<svg style="position:absolute;left:965px;top:394px" width="16" height="16" viewBox="0 0 16 16"><use href="#gear"/></svg>
<div class="ui" style="left:982px;top:396px;line-height:14px;height:14px;font-size:11px;letter-spacing:-0.15px">PnP-X-IP-Busenum…</div>
<div class="ui" style="left:1096px;top:396px;line-height:14px;height:14px;font-size:11px;letter-spacing:-0.15px">Der PnP-X-Bu…</div>
<div class="ui" style="left:1247px;top:396px;line-height:14px;height:14px;font-size:11px;letter-spacing:-0.15px">Deaktiviert</div>
<div class="ui" style="left:1312px;top:396px;line-height:14px;height:14px;font-size:11px;letter-spacing:-0.15px">Lokales System</div>
<div class="" style="left:981px;top:411px;width:414px;height:17px;background:#d4d0c8"></div>
<svg style="position:absolute;left:965px;top:411px" width="16" height="16" viewBox="0 0 16 16"><use href="#gear"/></svg>
<div class="ui" style="left:982px;top:413px;line-height:14px;height:14px;font-size:11px;letter-spacing:-0.15px">Port Proxy Service</div>
<div class="ui" style="left:1096px;top:413px;line-height:14px;height:14px;font-size:11px;letter-spacing:-0.15px">Multiplexes e…</div>
<div class="ui" style="left:1185px;top:413px;line-height:14px;height:14px;font-size:11px;letter-spacing:-0.15px">Gestartet</div>
<div class="ui" style="left:1247px;top:413px;line-height:14px;height:14px;font-size:11px;letter-spacing:-0.15px">Automat…</div>
<div class="ui" style="left:1312px;top:413px;line-height:14px;height:14px;font-size:11px;letter-spacing:-0.15px">Lokales System</div>
<svg style="position:absolute;left:965px;top:428px" width="16" height="16" viewBox="0 0 16 16"><use href="#gear"/></svg>
<div class="ui" style="left:982px;top:430px;line-height:14px;height:14px;font-size:11px;letter-spacing:-0.15px">RAS-Verbindungsv…</div>
<div class="ui" style="left:1096px;top:430px;line-height:14px;height:14px;font-size:11px;letter-spacing:-0.15px">Verwaltet Ein…</div>
<div class="ui" style="left:1247px;top:430px;line-height:14px;height:14px;font-size:11px;letter-spacing:-0.15px">Manuell</div>
<div class="ui" style="left:1312px;top:430px;line-height:14px;height:14px;font-size:11px;letter-spacing:-0.15px">Lokales System</div>
<svg style="position:absolute;left:965px;top:445px" width="16" height="16" viewBox="0 0 16 16"><use href="#gear"/></svg>
<div class="ui" style="left:982px;top:447px;line-height:14px;height:14px;font-size:11px;letter-spacing:-0.15px">Registrierungsdiens…</div>
<div class="ui" style="left:1096px;top:447px;line-height:14px;height:14px;font-size:11px;letter-spacing:-0.15px">Registriert di…</div>
<div class="ui" style="left:1247px;top:447px;line-height:14px;height:14px;font-size:11px;letter-spacing:-0.15px">Manuell</div>
<div class="ui" style="left:1312px;top:447px;line-height:14px;height:14px;font-size:11px;letter-spacing:-0.15px">Lokaler Dienst</div>
<svg style="position:absolute;left:965px;top:462px" width="16" height="16" viewBox="0 0 16 16"><use href="#gear"/></svg>
<div class="ui" style="left:982px;top:464px;line-height:14px;height:14px;font-size:11px;letter-spacing:-0.15px">Remotedesktopdie…</div>
<div class="ui" style="left:1096px;top:464px;line-height:14px;height:14px;font-size:11px;letter-spacing:-0.15px">Ermöglicht Be…</div>
<div class="ui" style="left:1185px;top:464px;line-height:14px;height:14px;font-size:11px;letter-spacing:-0.15px">Gestartet</div>
<div class="ui" style="left:1247px;top:464px;line-height:14px;height:14px;font-size:11px;letter-spacing:-0.15px">Manuell</div>
<div class="ui" style="left:1312px;top:464px;line-height:14px;height:14px;font-size:11px;letter-spacing:-0.15px">Netzwerkdienst</div>
<svg style="position:absolute;left:965px;top:479px" width="16" height="16" viewBox="0 0 16 16"><use href="#gear"/></svg>
<div class="ui" style="left:982px;top:481px;line-height:14px;height:14px;font-size:11px;letter-spacing:-0.15px">Remoteprozedurau…</div>
<div class="ui" style="left:1096px;top:481px;line-height:14px;height:14px;font-size:11px;letter-spacing:-0.15px">Der RPCSS-Di…</div>
<div class="ui" style="left:1185px;top:481px;line-height:14px;height:14px;font-size:11px;letter-spacing:-0.15px">Gestartet</div>
<div class="ui" style="left:1247px;top:481px;line-height:14px;height:14px;font-size:11px;letter-spacing:-0.15px">Automat…</div>
<div class="ui" style="left:1312px;top:481px;line-height:14px;height:14px;font-size:11px;letter-spacing:-0.15px">Netzwerkdienst</div>
<svg style="position:absolute;left:965px;top:496px" width="16" height="16" viewBox="0 0 16 16"><use href="#gear"/></svg>
<div class="ui" style="left:982px;top:498px;line-height:14px;height:14px;font-size:11px;letter-spacing:-0.15px">Remoteregistrierung</div>
<div class="ui" style="left:1096px;top:498px;line-height:14px;height:14px;font-size:11px;letter-spacing:-0.15px">Ermöglicht Re…</div>
<div class="ui" style="left:1185px;top:498px;line-height:14px;height:14px;font-size:11px;letter-spacing:-0.15px">Gestartet</div>
<div class="ui" style="left:1247px;top:498px;line-height:14px;height:14px;font-size:11px;letter-spacing:-0.15px">Automat…</div>
<div class="ui" style="left:1312px;top:498px;line-height:14px;height:14px;font-size:11px;letter-spacing:-0.15px">Lokaler Dienst</div>
<svg style="position:absolute;left:965px;top:513px" width="16" height="16" viewBox="0 0 16 16"><use href="#gear"/></svg>
<div class="ui" style="left:982px;top:515px;line-height:14px;height:14px;font-size:11px;letter-spacing:-0.15px">Richtlinie zum Entfe…</div>
<div class="ui" style="left:1096px;top:515px;line-height:14px;height:14px;font-size:11px;letter-spacing:-0.15px">Lässt eine Ko…</div>
<div class="ui" style="left:1247px;top:515px;line-height:14px;height:14px;font-size:11px;letter-spacing:-0.15px">Manuell</div>
<div class="ui" style="left:1312px;top:515px;line-height:14px;height:14px;font-size:11px;letter-spacing:-0.15px">Lokales System</div>
<svg style="position:absolute;left:965px;top:530px" width="16" height="16" viewBox="0 0 16 16"><use href="#gear"/></svg>
<div class="ui" style="left:982px;top:532px;line-height:14px;height:14px;font-size:11px;letter-spacing:-0.15px">Richtlinienergebniss…</div>
<div class="ui" style="left:1096px;top:532px;line-height:14px;height:14px;font-size:11px;letter-spacing:-0.15px">Stellt einen N…</div>
<div class="ui" style="left:1247px;top:532px;line-height:14px;height:14px;font-size:11px;letter-spacing:-0.15px">Manuell</div>
<div class="ui" style="left:1312px;top:532px;line-height:14px;height:14px;font-size:11px;letter-spacing:-0.15px">Lokales System</div>
<svg style="position:absolute;left:965px;top:547px" width="16" height="16" viewBox="0 0 16 16"><use href="#gear"/></svg>
<div class="ui" style="left:982px;top:549px;line-height:14px;height:14px;font-size:11px;letter-spacing:-0.15px">Routing und RAS</div>
<div class="ui" style="left:1096px;top:549px;line-height:14px;height:14px;font-size:11px;letter-spacing:-0.15px">Bietet Routin…</div>
<div class="ui" style="left:1247px;top:549px;line-height:14px;height:14px;font-size:11px;letter-spacing:-0.15px">Deaktiviert</div>
<div class="ui" style="left:1312px;top:549px;line-height:14px;height:14px;font-size:11px;letter-spacing:-0.15px">Lokales System</div>
<svg style="position:absolute;left:965px;top:564px" width="16" height="16" viewBox="0 0 16 16"><use href="#gear"/></svg>
<div class="ui" style="left:982px;top:566px;line-height:14px;height:14px;font-size:11px;letter-spacing:-0.15px">RPC-Endpunktzuor…</div>
<div class="ui" style="left:1096px;top:566px;line-height:14px;height:14px;font-size:11px;letter-spacing:-0.15px">Löst RPC-Sch…</div>
<div class="ui" style="left:1185px;top:566px;line-height:14px;height:14px;font-size:11px;letter-spacing:-0.15px">Gestartet</div>
<div class="ui" style="left:1247px;top:566px;line-height:14px;height:14px;font-size:11px;letter-spacing:-0.15px">Automat…</div>
<div class="ui" style="left:1312px;top:566px;line-height:14px;height:14px;font-size:11px;letter-spacing:-0.15px">Netzwerkdienst</div>
<svg style="position:absolute;left:965px;top:581px" width="16" height="16" viewBox="0 0 16 16"><use href="#gear"/></svg>
<div class="ui" style="left:982px;top:583px;line-height:14px;height:14px;font-size:11px;letter-spacing:-0.15px">RPC-Locator</div>
<div class="ui" style="left:1096px;top:583px;line-height:14px;height:14px;font-size:11px;letter-spacing:-0.15px">Unter Windo…</div>
<div class="ui" style="left:1247px;top:583px;line-height:14px;height:14px;font-size:11px;letter-spacing:-0.15px">Manuell</div>
<div class="ui" style="left:1312px;top:583px;line-height:14px;height:14px;font-size:11px;letter-spacing:-0.15px">Netzwerkdienst</div>
<svg style="position:absolute;left:965px;top:598px" width="16" height="16" viewBox="0 0 16 16"><use href="#gear"/></svg>
<div class="ui" style="left:982px;top:600px;line-height:14px;height:14px;font-size:11px;letter-spacing:-0.15px">Sekundäre Anmeld…</div>
<div class="ui" style="left:1096px;top:600px;line-height:14px;height:14px;font-size:11px;letter-spacing:-0.15px">Aktiviert das …</div>
<div class="ui" style="left:1247px;top:600px;line-height:14px;height:14px;font-size:11px;letter-spacing:-0.15px">Manuell</div>
<div class="ui" style="left:1312px;top:600px;line-height:14px;height:14px;font-size:11px;letter-spacing:-0.15px">Lokales System</div>
<svg style="position:absolute;left:965px;top:615px" width="16" height="16" viewBox="0 0 16 16"><use href="#gear"/></svg>
<div class="ui" style="left:982px;top:617px;line-height:14px;height:14px;font-size:11px;letter-spacing:-0.15px">Server</div>
<div class="ui" style="left:1096px;top:617px;line-height:14px;height:14px;font-size:11px;letter-spacing:-0.15px">Unterstützt D…</div>
<div class="ui" style="left:1185px;top:617px;line-height:14px;height:14px;font-size:11px;letter-spacing:-0.15px">Gestartet</div>
<div class="ui" style="left:1247px;top:617px;line-height:14px;height:14px;font-size:11px;letter-spacing:-0.15px">Automat…</div>
<div class="ui" style="left:1312px;top:617px;line-height:14px;height:14px;font-size:11px;letter-spacing:-0.15px">Lokales System</div>
<svg style="position:absolute;left:965px;top:632px" width="16" height="16" viewBox="0 0 16 16"><use href="#gear"/></svg>
<div class="ui" style="left:982px;top:634px;line-height:14px;height:14px;font-size:11px;letter-spacing:-0.15px">Server für Threads…</div>
<div class="ui" style="left:1096px;top:634px;line-height:14px;height:14px;font-size:11px;letter-spacing:-0.15px">Bietet eine n…</div>
<div class="ui" style="left:1247px;top:634px;line-height:14px;height:14px;font-size:11px;letter-spacing:-0.15px">Manuell</div>
<div class="ui" style="left:1312px;top:634px;line-height:14px;height:14px;font-size:11px;letter-spacing:-0.15px">Lokaler Dienst</div>
<div class="" style="left:749px;top:647px;width:684px;height:1px;background:#d4d0c8"></div>
<div class="" style="left:749px;top:648px;width:684px;height:1px;background:#fff"></div>
<div class="" style="left:747px;top:649px;width:687px;height:1px;background:#000"></div>
<div class="" style="left:1416px;top:191px;width:16px;height:456px;background:repeating-conic-gradient(#d4d0c8 0 25%,#fff 0 50%) 0 0/2px 2px"></div>
<div class="" style="left:1416px;top:191px;width:16px;height:16px;background:#d4d0c8;box-shadow:inset -1px -1px #404040,inset 1px 1px #fff,inset -2px -2px #808080;"></div>
<div style="left:1420px;top:197px;width:0;height:0;border-left:4px solid transparent;border-right:4px solid transparent;border-bottom:4px solid #000"></div>
<div class="" style="left:1416px;top:631px;width:16px;height:16px;background:#d4d0c8;box-shadow:inset -1px -1px #404040,inset 1px 1px #fff,inset -2px -2px #808080;"></div>
<div style="left:1420px;top:637px;width:0;height:0;border-left:4px solid transparent;border-right:4px solid transparent;border-top:4px solid #000"></div>
<div class="" style="left:1416px;top:376px;width:16px;height:71px;background:#d4d0c8;box-shadow:inset -1px -1px #404040,inset 1px 1px #fff,inset -2px -2px #808080;"></div>
<div class="" style="left:537px;top:191px;width:410px;height:461px;background:#d4d0c8;box-shadow:inset -1px -1px #404040,inset 1px 1px #d4d0c8,inset -2px -2px #808080,inset 2px 2px #fff;"></div>
<div class="" style="left:540px;top:194px;width:404px;height:18px;background:#0a246a"></div>
<div class="ui" style="left:542px;top:196px;line-height:14px;height:14px;font-size:12px;color:#fff;font-weight:bold;letter-spacing:-0.1px">Eigenschaften von Port Proxy Service (Lokaler Computer)</div>
<div class="" style="left:926px;top:196px;width:16px;height:14px;background:#d4d0c8;box-shadow:inset -1px -1px #404040,inset 1px 1px #fff,inset -2px -2px #808080;"></div>
<svg style="position:absolute;left:930px;top:199px" width="9" height="8"><path d="M0.5,0.5 L8,7.5 M8,0.5 L0.5,7.5" stroke="#000" stroke-width="1.6"/></svg>
<div class="" style="left:546px;top:240px;width:392px;height:373px;background:#d4d0c8;box-shadow:inset 1px 1px #fff,inset -1px -1px #404040,inset -2px -2px #808080"></div>
<div class="" style="left:608px;top:222px;width:56px;height:19px;background:#d4d0c8;border-top-left-radius:2px;border-top-right-radius:2px;box-shadow:inset 1px 1px #fff,inset -1px 0 #404040,inset -2px 0 #808080"></div>
<div class="ui" style="left:611px;top:224px;line-height:14px;height:14px;font-size:11px;letter-spacing:-0.3px">Anmelden</div>
<div class="" style="left:664px;top:222px;width:97px;height:19px;background:#d4d0c8;border-top-left-radius:2px;border-top-right-radius:2px;box-shadow:inset 1px 1px #fff,inset -1px 0 #404040,inset -2px 0 #808080"></div>
<div class="ui" style="left:670px;top:224px;line-height:14px;height:14px;font-size:11px;letter-spacing:-0.3px">Wiederherstellung</div>
<div class="" style="left:761px;top:222px;width:86px;height:19px;background:#d4d0c8;border-top-left-radius:2px;border-top-right-radius:2px;box-shadow:inset 1px 1px #fff,inset -1px 0 #404040,inset -2px 0 #808080"></div>
<div class="ui" style="left:767px;top:224px;line-height:14px;height:14px;font-size:11px;letter-spacing:-0.3px">Abhängigkeiten</div>
<div class="" style="left:546px;top:220px;width:61px;height:23px;background:#d4d0c8;border-top-left-radius:2px;border-top-right-radius:2px;box-shadow:inset 1px 1px #fff,inset -1px 0 #404040,inset -2px 0 #808080"></div>
<div class="ui" style="left:554px;top:223px;line-height:14px;height:14px;font-size:11px;letter-spacing:-0.3px">Allgemein</div>
<div class="ui" style="left:561px;top:257px;line-height:14px;height:14px;font-size:11px;letter-spacing:-0.3px">Dienstname:</div>
<div class="" style="left:651px;top:257px;width:81px;height:13px;background:#0a246a"></div>
<div class="ui" style="left:652px;top:257px;line-height:14px;height:14px;font-size:11px;color:#fff;letter-spacing:-0.3px">PortProxyService</div>
<div class="ui" style="left:561px;top:281px;line-height:14px;height:14px;font-size:11px;letter-spacing:-0.3px">Anzeigename:</div>
<div class="ui" style="left:651px;top:281px;line-height:14px;height:14px;font-size:11px;letter-spacing:-0.3px">Port Proxy Service</div>
<div class="ui" style="left:561px;top:312px;line-height:14px;height:14px;font-size:11px;letter-spacing:-0.3px">Beschreibung:</div>
<div class="" style="left:651px;top:307px;width:267px;height:36px;background:#d4d0c8;box-shadow:inset 1px 1px #808080,inset -1px -1px #fff;"></div>
<div class="ui" style="left:653px;top:308px;line-height:14px;height:14px;font-size:11px;letter-spacing:-0.17px">Multiplexes external TCP/IP data on local port</div>
<div class="" style="left:900px;top:308px;width:16px;height:16px;background:#d4d0c8;box-shadow:inset -1px -1px #404040,inset 1px 1px #fff,inset -2px -2px #808080;"></div>
<div style="left:904px;top:313px;width:0;height:0;border-left:4px solid transparent;border-right:4px solid transparent;border-bottom:4px solid #808080"></div>
<div class="" style="left:900px;top:325px;width:16px;height:16px;background:#d4d0c8;box-shadow:inset -1px -1px #404040,inset 1px 1px #fff,inset -2px -2px #808080;"></div>
<div style="left:904px;top:331px;width:0;height:0;border-left:4px solid transparent;border-right:4px solid transparent;border-top:4px solid #808080"></div>
<div class="ui" style="left:561px;top:354px;line-height:14px;height:14px;font-size:11px;letter-spacing:-0.3px">Pfad zur EXE-Datei:</div>
<div class="ui" style="left:561px;top:370px;line-height:14px;height:14px;font-size:11px;letter-spacing:-0.05px">"C:\work\ais\puls200.PortProxyService\puls200.PortProxyService.exe"</div>
<div class="ui" style="left:561px;top:398px;line-height:14px;height:14px;font-size:11px;letter-spacing:-0.3px">Starttyp:</div>
<div class="" style="left:651px;top:395px;width:267px;height:21px;background:#fff;box-shadow:inset 1px 1px #808080,inset -1px -1px #fff,inset 2px 2px #404040,inset -2px -2px #d4d0c8;"></div>
<div class="ui" style="left:654px;top:398px;line-height:14px;height:14px;font-size:11px;letter-spacing:-0.2px">Automatisch (Verzögerter Start)</div>
<div class="" style="left:900px;top:397px;width:16px;height:17px;background:#d4d0c8;box-shadow:inset -1px -1px #404040,inset 1px 1px #fff,inset -2px -2px #808080;"></div>
<div style="left:904px;top:404px;width:0;height:0;border-left:4px solid transparent;border-right:4px solid transparent;border-top:4px solid #000"></div>
<div class="ui" style="left:561px;top:435px;line-height:14px;height:14px;font-size:11px;color:#000080;text-decoration:underline;text-decoration-skip-ink:none;letter-spacing:-0.2px">Unterstützung beim Konfigurieren der Startoptionen für Dienste</div>
<div class="" style="left:561px;top:457px;width:354px;height:1px;background:#808080"></div>
<div class="" style="left:561px;top:458px;width:354px;height:1px;background:#fff"></div>
<div class="ui" style="left:561px;top:465px;line-height:14px;height:14px;font-size:11px;letter-spacing:-0.3px">Dienststatus:</div>
<div class="ui" style="left:651px;top:465px;line-height:14px;height:14px;font-size:11px;letter-spacing:-0.3px">Gestartet</div>
<div class="" style="left:561px;top:489px;width:84px;height:23px;background:#d4d0c8;box-shadow:inset -1px -1px #404040,inset 1px 1px #fff,inset -2px -2px #808080;"></div>
<div class="ui" style="left:561px;top:493px;width:84px;height:14px;line-height:14px;text-align:center;letter-spacing:-0.3px;color:#808080;text-shadow:1px 1px #fff;">Starten</div>
<div class="" style="left:651px;top:489px;width:84px;height:23px;background:#d4d0c8;box-shadow:inset -1px -1px #404040,inset 1px 1px #fff,inset -2px -2px #808080;"></div>
<div class="ui" style="left:651px;top:493px;width:84px;height:14px;line-height:14px;text-align:center;letter-spacing:-0.3px;">Beenden</div>
<div class="" style="left:741px;top:489px;width:86px;height:23px;background:#d4d0c8;box-shadow:inset -1px -1px #404040,inset 1px 1px #fff,inset -2px -2px #808080;"></div>
<div class="ui" style="left:741px;top:493px;width:86px;height:14px;line-height:14px;text-align:center;letter-spacing:-0.3px;color:#808080;text-shadow:1px 1px #fff;">Anhalten</div>
<div class="" style="left:834px;top:489px;width:84px;height:23px;background:#d4d0c8;box-shadow:inset -1px -1px #404040,inset 1px 1px #fff,inset -2px -2px #808080;"></div>
<div class="ui" style="left:834px;top:493px;width:84px;height:14px;line-height:14px;text-align:center;letter-spacing:-0.3px;color:#808080;text-shadow:1px 1px #fff;">Fortsetzen</div>
<div class="ui" style="left:561px;top:523px;line-height:14px;height:14px;font-size:11px;letter-spacing:-0.22px">Sie können die Startparameter angeben, die übernommen werden sollen,</div>
<div class="ui" style="left:561px;top:536px;line-height:14px;height:14px;font-size:11px;letter-spacing:-0.3px">wenn der Dienst von hier aus gestartet wird.</div>
<div class="ui" style="left:561px;top:565px;line-height:14px;height:14px;font-size:11px;color:#808080;text-shadow:1px 1px #fff;letter-spacing:-0.3px">Startparameter:</div>
<div class="" style="left:669px;top:561px;width:249px;height:22px;background:#d4d0c8;box-shadow:inset 1px 1px #808080,inset -1px -1px #fff,inset 2px 2px #404040,inset -2px -2px #d4d0c8;"></div>
<div class="" style="left:701px;top:619px;width:75px;height:23px;background:#d4d0c8;box-shadow:inset 1px 1px #000,inset -1px -1px #000,inset -2px -2px #404040,inset 2px 2px #fff,inset -3px -3px #808080;"></div>
<div class="ui" style="left:701px;top:623px;width:75px;height:14px;line-height:14px;text-align:center;letter-spacing:-0.3px;">OK</div>
<div class="" style="left:782px;top:619px;width:75px;height:23px;background:#d4d0c8;box-shadow:inset -1px -1px #404040,inset 1px 1px #fff,inset -2px -2px #808080;"></div>
<div class="ui" style="left:782px;top:623px;width:75px;height:14px;line-height:14px;text-align:center;letter-spacing:-0.3px;">Abbrechen</div>
<div class="" style="left:863px;top:619px;width:75px;height:23px;background:#d4d0c8;box-shadow:inset -1px -1px #404040,inset 1px 1px #fff,inset -2px -2px #808080;"></div>
<div class="ui" style="left:863px;top:623px;width:75px;height:14px;line-height:14px;text-align:center;letter-spacing:-0.3px;color:#808080;text-shadow:1px 1px #fff;">Übernehmen</div>
</body></html>
